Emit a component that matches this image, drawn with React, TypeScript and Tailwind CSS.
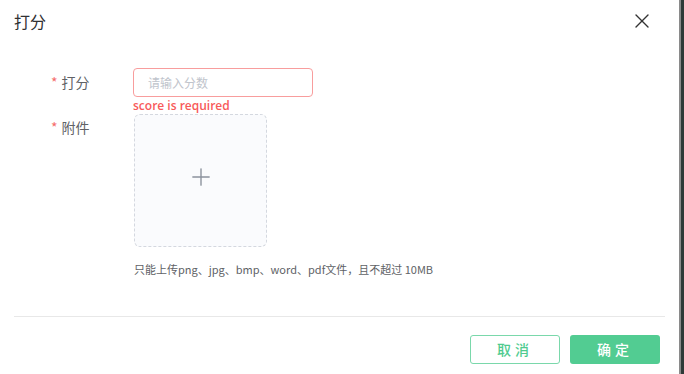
import { Plus, X } from "lucide-react";

const font = { fontFamily: '"Noto Sans CJK SC", "Noto Sans", sans-serif' };

const App = () => {
  return (
    <div className="flex h-[374px] w-[684px] bg-[#2f3a38]" style={font}>
      <div className="flex h-full w-[681px] flex-col border-r-2 border-[#8a8a8a] bg-white">
        {/* Header */}
        <div className="flex h-[42px] items-center justify-between pl-[14px] pr-[25px]">
          <span className="text-[16px] leading-none text-[#303133]">打分</span>
          <X size={24} strokeWidth={1.4} className="text-[#333]" />
        </div>

        {/* Body */}
        <div className="flex flex-1 flex-col pt-[26px]">
          <div className="flex">
            <label className="flex h-[29px] w-[133px] items-center pl-[51px] text-[14px] text-[#606266]">
              <span className="mr-[4px] text-[#f56c6c]">*</span>打分
            </label>
            <div className="flex flex-col">
              <div className="flex h-[29px] w-[180px] items-center rounded-[4px] border border-[#f89d9d] px-[14px] text-[12px] text-[#c0c4cc]">
                请输入分数
              </div>
              <span className="mt-[1px] text-[12px] leading-[16px] font-semibold text-[#f85a5a]" style={{ fontFamily: '"Open Sans", sans-serif' }}>
                score is required
              </span>
            </div>
          </div>

          <div className="flex">
            <label className="flex h-[26px] w-[134px] items-center pl-[51px] text-[14px] text-[#606266]">
              <span className="mr-[4px] text-[#f56c6c]">*</span>附件
            </label>
            <div className="flex flex-col">
              <div className="flex h-[133px] w-[133px] items-center justify-center rounded-[6px] border border-dashed border-[#d4d8df] bg-[#fafbfd]">
                <Plus size={28} strokeWidth={1.2} className="mb-[8px] text-[#8c939d]" />
              </div>
              <span className="mt-[14px] text-[11px] text-[#606266]">
                只能上传png、jpg、bmp、word、pdf文件，且不超过 10MB
              </span>
            </div>
          </div>
        </div>

        {/* Footer */}
        <div className="mx-[14px] border-t border-[#e8e8e8]" />
        <div className="flex justify-end gap-[10px] pr-[19px] pt-[18px] pb-[10px]">
          <button className="h-[29px] w-[90px] rounded-[3px] border border-[#7ad8ab] bg-white text-[14px] font-medium tracking-[4px] text-[#4fcb8f]">
            取消
          </button>
          <button className="h-[29px] w-[90px] rounded-[3px] bg-[#52cc92] text-[14px] font-medium tracking-[4px] text-white">
            确定
          </button>
        </div>
      </div>
    </div>
  );
};

export default App;
